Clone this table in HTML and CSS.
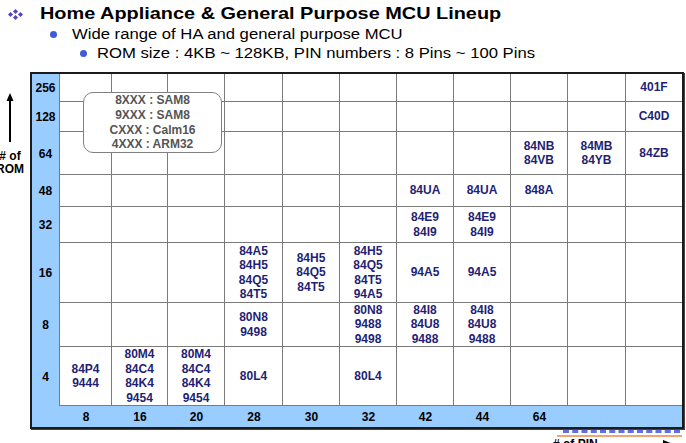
FILE: index.html
```html
<!DOCTYPE html>
<html>
<head>
<meta charset="utf-8">
<link rel="stylesheet" href="styles.css">
</head>
<body>
<div class="page">
  <header class="head">
    <div class="l1">
      <svg class="quad" width="15" height="11" viewBox="0 0 15 11">
        <polygon points="7.5,0 10,2.5 7.5,5 5,2.5"/>
        <polygon points="2.5,3 5,5.5 2.5,8 0,5.5"/>
        <polygon points="12.5,3 15,5.5 12.5,8 10,5.5"/>
        <polygon points="7.5,6 10,8.5 7.5,11 5,8.5"/>
      </svg>
      <span class="t1">Home Appliance &amp; General Purpose MCU Lineup</span>
    </div>
    <div class="l2"><span class="dot"></span><span class="t2">Wide range of HA and general purpose MCU</span></div>
    <div class="l3"><span class="dot"></span><span class="t2">ROM size : 4KB ~ 128KB, PIN numbers : 8 Pins ~ 100 Pins</span></div>
  </header>

  <div class="chart-row">
    <div class="yaxis">
      <svg class="uparrow" width="12" height="49" viewBox="0 0 12 49">
        <line x1="6" y1="6" x2="6" y2="49" stroke="#000" stroke-width="2"/>
        <polygon points="2.5,8 6,0 9.5,8" fill="#000"/>
      </svg>
      <div class="ylab">#&nbsp;of</div>
      <div class="ylab">ROM</div>
    </div>

    <div class="frame">
      <div class="grid">
        <!-- 256 -->
        <div class="y">256</div>
        <div class="c"></div><div class="c"></div><div class="c"></div><div class="c"></div><div class="c"></div>
        <div class="c"></div><div class="c"></div><div class="c"></div><div class="c"></div><div class="c"></div>
        <div class="c last">401F</div>
        <!-- 128 -->
        <div class="y">128</div>
        <div class="c"></div><div class="c"></div><div class="c"></div><div class="c"></div><div class="c"></div>
        <div class="c"></div><div class="c"></div><div class="c"></div><div class="c"></div><div class="c"></div>
        <div class="c last">C40D</div>
        <!-- 64 -->
        <div class="y">64</div>
        <div class="c"></div><div class="c"></div><div class="c"></div><div class="c"></div><div class="c"></div>
        <div class="c"></div><div class="c"></div><div class="c"></div>
        <div class="c">84NB<br>84VB</div>
        <div class="c">84MB<br>84YB</div>
        <div class="c last">84ZB</div>
        <!-- 48 -->
        <div class="y">48</div>
        <div class="c"></div><div class="c"></div><div class="c"></div><div class="c"></div><div class="c"></div>
        <div class="c"></div>
        <div class="c">84UA</div>
        <div class="c">84UA</div>
        <div class="c">848A</div>
        <div class="c"></div>
        <div class="c last"></div>
        <!-- 32 -->
        <div class="y">32</div>
        <div class="c"></div><div class="c"></div><div class="c"></div><div class="c"></div><div class="c"></div>
        <div class="c"></div>
        <div class="c">84E9<br>84I9</div>
        <div class="c">84E9<br>84I9</div>
        <div class="c"></div><div class="c"></div>
        <div class="c last"></div>
        <!-- 16 -->
        <div class="y">16</div>
        <div class="c"></div><div class="c"></div><div class="c"></div>
        <div class="c">84A5<br>84H5<br>84Q5<br>84T5</div>
        <div class="c">84H5<br>84Q5<br>84T5</div>
        <div class="c">84H5<br>84Q5<br>84T5<br>94A5</div>
        <div class="c">94A5</div>
        <div class="c">94A5</div>
        <div class="c"></div><div class="c"></div>
        <div class="c last"></div>
        <!-- 8 -->
        <div class="y">8</div>
        <div class="c"></div><div class="c"></div><div class="c"></div>
        <div class="c">80N8<br>9498</div>
        <div class="c"></div>
        <div class="c">80N8<br>9488<br>9498</div>
        <div class="c">84I8<br>84U8<br>9488</div>
        <div class="c">84I8<br>84U8<br>9488</div>
        <div class="c"></div><div class="c"></div>
        <div class="c last"></div>
        <!-- 4 -->
        <div class="y">4</div>
        <div class="c">84P4<br>9444</div>
        <div class="c">80M4<br>84C4<br>84K4<br>9454</div>
        <div class="c">80M4<br>84C4<br>84K4<br>9454</div>
        <div class="c">80L4</div>
        <div class="c"></div>
        <div class="c">80L4</div>
        <div class="c"></div><div class="c"></div><div class="c"></div><div class="c"></div>
        <div class="c last"></div>
        <!-- pins -->
        <div class="x"></div>
        <div class="x">8</div><div class="x">16</div><div class="x">20</div><div class="x">28</div>
        <div class="x">30</div><div class="x">32</div><div class="x">42</div><div class="x">44</div>
        <div class="x">64</div><div class="x"></div><div class="x"></div>
      </div>

      <div class="legend">
        <div>8XXX : SAM8</div>
        <div>9XXX : SAM8</div>
        <div>CXXX : Calm16</div>
        <div>4XXX : ARM32</div>
      </div>
    </div>
  </div>

  <div class="xaxis">
    <span class="blue-dash"></span>
    <span class="orange-line"></span>
    <div class="xlab-row">
      <span class="xlab">#&nbsp;of&nbsp;PIN</span>
      <svg class="rarrow" width="70" height="10" viewBox="0 0 70 10">
        <line x1="0" y1="5" x2="62" y2="5" stroke="#000" stroke-width="2"/>
        <polygon points="60,1 70,5 60,9" fill="#000"/>
      </svg>
    </div>
  </div>
</div>
</body>
</html>
```

FILE: styles.css
```css
* { box-sizing: border-box; }

body {
  margin: 0;
  background: #ffffff;
  font-family: "Liberation Sans", Arial, sans-serif;
  color: #000;
  overflow: hidden;
}

.page {
  width: 686px;
  height: 443px;
  overflow: hidden;
}

/* ---------- header ---------- */
.head {
  padding-top: 3px;
}

.l1 {
  display: flex;
  align-items: center;
  height: 22px;
  padding-left: 8px;
}

.quad {
  fill: #5246c6;
  margin-right: 17px;
  flex: none;
}

.t1 {
  display: inline-block;
  font-size: 17px;
  line-height: 22px;
  font-weight: bold;
  white-space: nowrap;
  transform: scaleX(1.17);
  transform-origin: 0 50%;
}

.l2, .l3 {
  display: flex;
  align-items: center;
  height: 19px;
}

.l2 { padding-left: 50px; }
.l3 { padding-left: 80px; }

.dot {
  flex: none;
  width: 7px;
  height: 7px;
  border-radius: 50%;
  background: #3d5ad8;
}

.l2 .dot { margin-right: 15px; }
.l3 .dot { margin-right: 10px; }

.t2 {
  display: inline-block;
  font-size: 14px;
  line-height: 19px;
  white-space: nowrap;
  transform: scaleX(1.19);
  transform-origin: 0 50%;
}

/* ---------- chart ---------- */
.chart-row {
  display: flex;
  margin-top: 9px;
}

.yaxis {
  width: 20px;
  flex: none;
  display: flex;
  flex-direction: column;
  align-items: center;
  padding-top: 21px;
}

.uparrow {
  display: block;
  margin-left: 0;
}

.ylab {
  font-size: 12px;
  font-weight: bold;
  line-height: 13px;
  white-space: nowrap;
}

.uparrow + .ylab {
  margin-top: 8px;
}

.frame {
  position: relative;
  margin-left: 10px;
  border: 2px solid #1b1b1b;
  box-shadow: 1px 1px 0 #444;
  background: #99ccff;
}

.grid {
  display: grid;
  grid-template-columns: 28px 52px 56px 57px 58px 57px 57px 57px 57px 57px 58px 56px;
  grid-template-rows: 28px 30px 43px 32px 36px 60px 44px 59px 21px;
}

.y {
  display: flex;
  align-items: center;
  justify-content: center;
  font-size: 12px;
  font-weight: bold;
  border-right: 1px solid #7a7a7a;
}

.c {
  display: flex;
  align-items: center;
  justify-content: center;
  text-align: center;
  background: #ffffff;
  border-right: 1px solid #7a7a7a;
  border-bottom: 1px solid #7a7a7a;
  font-size: 12px;
  font-weight: bold;
  line-height: 14.5px;
  color: #1f1f75;
}

.c.last {
  border-right: none;
}

.x {
  display: flex;
  align-items: center;
  justify-content: center;
  font-size: 12px;
  font-weight: bold;
}

.legend {
  position: absolute;
  left: 51px;
  top: 18px;
  width: 139px;
  height: 61px;
  border: 1px solid #808080;
  border-radius: 10px;
  background: #ffffff;
  display: flex;
  flex-direction: column;
  justify-content: center;
  align-items: center;
  font-size: 12px;
  font-weight: bold;
  line-height: 14.7px;
  color: #555555;
}

/* ---------- x axis ---------- */
.xaxis {
  position: relative;
  margin-left: 553px;
  height: 20px;
}

.blue-dash {
  position: absolute;
  left: 10px;
  top: 1px;
  width: 117px;
  border-top: 3px dashed #5f6fe6;
}

.orange-line {
  position: absolute;
  left: 4px;
  top: 6px;
  width: 125px;
  height: 2px;
  background: #f0a577;
}

.xlab-row {
  display: flex;
  align-items: center;
  padding-top: 8px;
}

.xlab {
  font-size: 12px;
  font-weight: bold;
  line-height: 14px;
  white-space: nowrap;
}

.rarrow {
  display: block;
  margin-left: 5px;
}
```
